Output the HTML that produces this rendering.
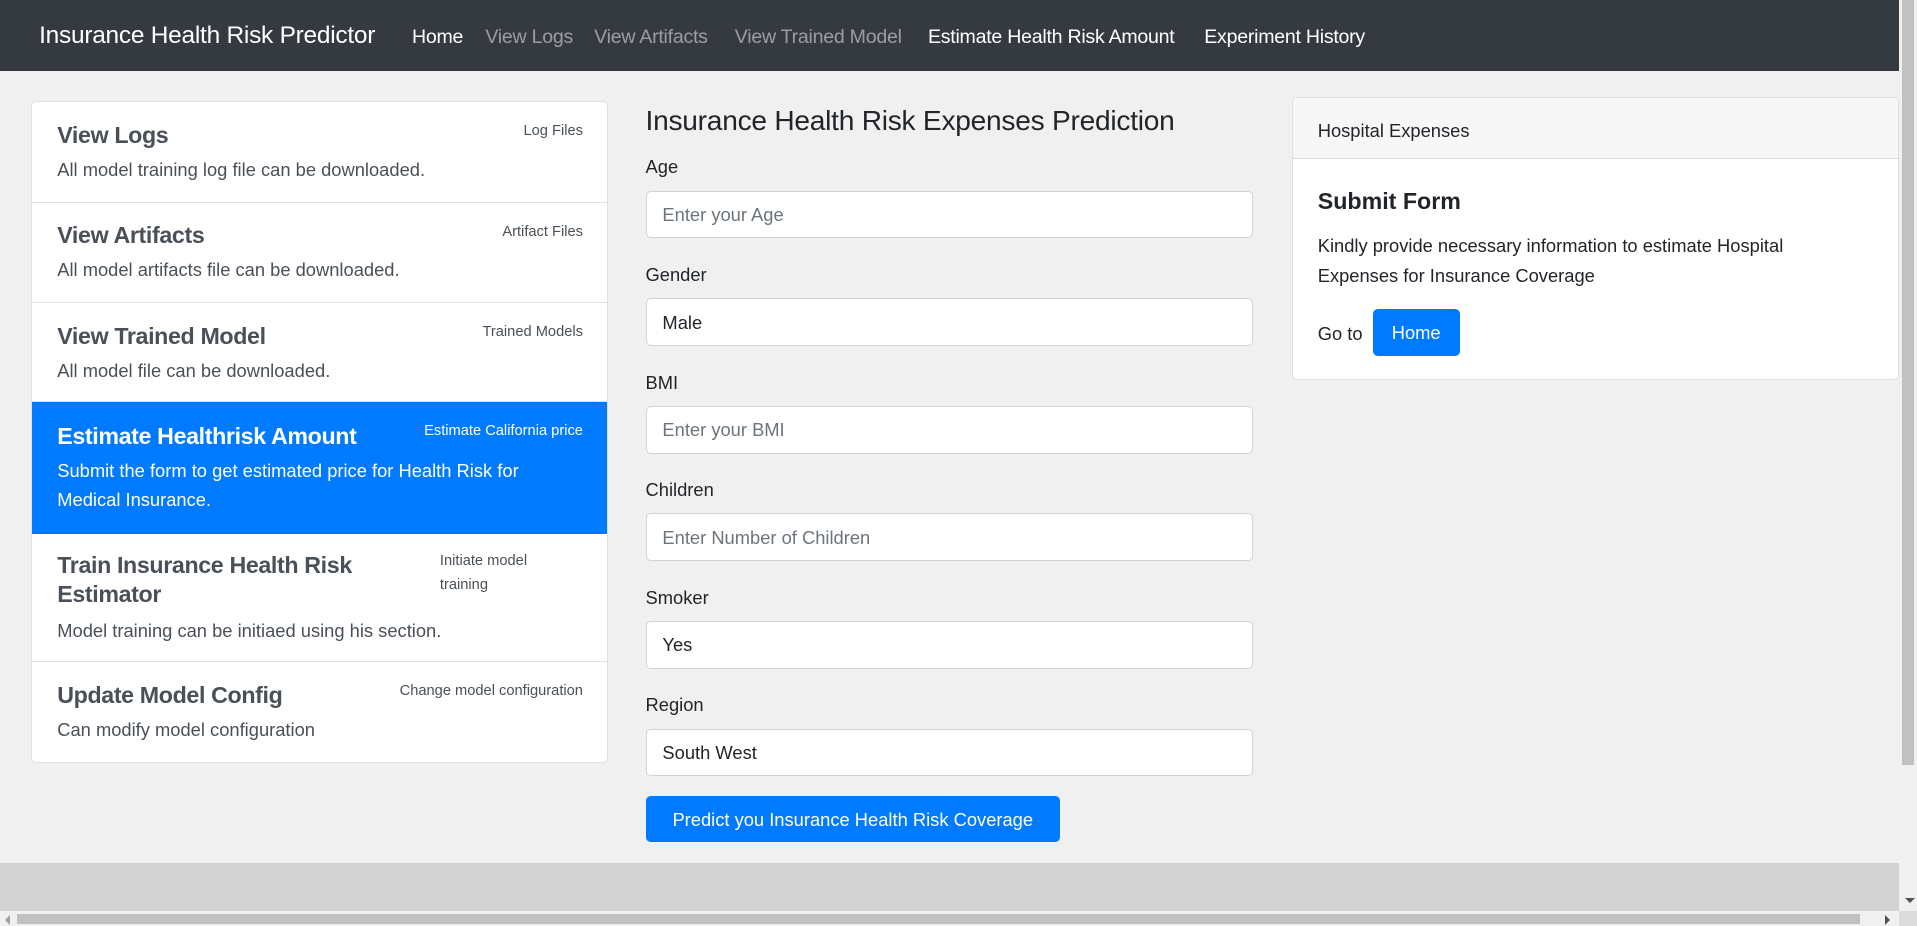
<!DOCTYPE html>
<html><head><meta charset="utf-8"><style>
html,body{margin:0;padding:0;width:1917px;height:926px;overflow:hidden;background:#f0f0f0;font-family:"Liberation Sans",sans-serif;}
#z{position:absolute;left:0;top:0;width:1568px;height:757px;zoom:1.2226;color:#212529;}
.a{position:absolute;white-space:nowrap;}
.nav{position:absolute;left:0;top:0;width:1568px;height:58px;background:#343a40;}
.nav .a{top:21px;font-size:16px;color:rgba(255,255,255,.5);letter-spacing:-0.2px;}
.card{position:absolute;background:#fff;border:1px solid rgba(0,0,0,.125);border-radius:4px;box-sizing:border-box;overflow:hidden;}
.it{position:absolute;left:0;width:472px;border-bottom:1px solid rgba(0,0,0,.125);box-sizing:border-box;}
.it h5{position:absolute;left:21px;margin:0;font-size:19px;font-weight:bold;color:#495057;letter-spacing:-0.3px;}
.it small{position:absolute;right:21px;top:17px;font-size:12px;color:#495057;}
.it p{position:absolute;left:21px;margin:0;font-size:15px;color:#495057;line-height:24px;}
.lbl{position:absolute;left:528px;font-size:15px;}
.inp{position:absolute;left:528px;width:497px;height:39px;background:#fff;border:1px solid #ced4da;border-radius:4px;box-sizing:border-box;font-size:15px;padding:10px 13px;}
.ph{color:#6c757d;}
</style></head><body>
<div id="z">
<div class="nav">
<span class="a" style="left:32px;top:18px;font-size:20px;color:#fff">Insurance Health Risk Predictor</span>
<span class="a" style="left:337px;color:#fff">Home</span>
<span class="a" style="left:397px">View Logs</span>
<span class="a" style="left:486px">View Artifacts</span>
<span class="a" style="left:601px">View Trained Model</span>
<span class="a" style="left:759px;color:#fff">Estimate Health Risk Amount</span>
<span class="a" style="left:985px;color:#fff">Experiment History</span>
</div>

<div class="card" style="left:25px;top:83px;width:472px;height:541px">
<div class="it" style="top:0;height:82px"><h5 style="top:16px">View Logs</h5><small>Log Files</small><p style="top:43px">All model training log file can be downloaded.</p></div>
<div class="it" style="top:82px;height:82px"><h5 style="top:16px">View Artifacts</h5><small>Artifact Files</small><p style="top:43px">All model artifacts file can be downloaded.</p></div>
<div class="it" style="top:164px;height:81px"><h5 style="top:16px">View Trained Model</h5><small>Trained Models</small><p style="top:43px">All model file can be downloaded.</p></div>
<div class="it" style="top:245px;height:108px;background:#007bff;border-color:#007bff"><h5 style="top:17px;color:#fff">Estimate Healthrisk Amount</h5><small style="color:#fff">Estimate California price</small><p style="top:44px;color:#fff;white-space:normal;width:430px">Submit the form to get estimated price for Health Risk for Medical Insurance.</p></div>
<div class="it" style="top:353px;height:105px"><h5 style="top:14px;line-height:24px;white-space:normal;width:270px">Train Insurance Health Risk Estimator</h5><small style="left:334px;top:12px;line-height:20px;white-space:normal">Initiate model<br>training</small><p style="top:67px">Model training can be initiaed using his section.</p></div>
<div class="it" style="top:458px;height:83px;border:0"><h5 style="top:16px">Update Model Config</h5><small>Change model configuration</small><p style="top:43px">Can modify model configuration</p></div>
</div>

<div class="a" style="left:528px;top:86px;font-size:23px;font-weight:400;letter-spacing:-0.2px">Insurance Health Risk Expenses Prediction</div>
<div class="lbl" style="top:128px">Age</div><div class="inp" style="top:156px"><span class="ph">Enter your Age</span></div>
<div class="lbl" style="top:216px">Gender</div><div class="inp" style="top:244px">Male</div>
<div class="lbl" style="top:304px">BMI</div><div class="inp" style="top:332px"><span class="ph">Enter your BMI</span></div>
<div class="lbl" style="top:392px">Children</div><div class="inp" style="top:420px"><span class="ph">Enter Number of Children</span></div>
<div class="lbl" style="top:480px">Smoker</div><div class="inp" style="top:508px">Yes</div>
<div class="lbl" style="top:568px">Region</div><div class="inp" style="top:596px">South West</div>
<div class="a" style="left:528px;top:651px;width:339px;height:38px;background:#007bff;border-radius:4px;color:#fff;font-size:15px;line-height:39px;text-align:center">Predict you Insurance Health Risk Coverage</div>

<div class="card" style="left:1057px;top:79px;width:496px;height:232px">
<div style="position:absolute;left:0;top:0;width:100%;height:50px;background:#f7f7f7;border-bottom:1px solid rgba(0,0,0,.125);box-sizing:border-box"></div>
<span class="a" style="left:20px;top:18px;font-size:15px">Hospital Expenses</span>
<span class="a" style="left:20px;top:74px;font-size:19px;font-weight:bold;color:#212529">Submit Form</span>
<div class="a" style="left:20px;top:109px;font-size:15px;line-height:25px;white-space:normal;width:450px">Kindly provide necessary information to estimate Hospital Expenses for Insurance Coverage</div>
<span class="a" style="left:20px;top:184px;font-size:15px">Go to</span>
<span class="a" style="left:65px;top:173px;width:71px;height:38px;background:#007bff;border-radius:4px;color:#fff;font-size:15px;line-height:39px;text-align:center">Home</span>
</div>

<div style="position:absolute;left:0;top:706px;width:1553px;height:39px;background:#d4d3d3"></div>
</div>
<div style="position:absolute;left:1899px;top:0;width:18px;height:911px;background:#f0f0f0"></div>
<div style="position:absolute;left:1902px;top:0;width:12px;height:765px;background:#c1c1c1"></div>
<div style="position:absolute;left:1905px;top:898px;width:0;height:0;border-left:5px solid transparent;border-right:5px solid transparent;border-top:5px solid #505050"></div>
<div style="position:absolute;left:0;top:911px;width:1917px;height:15px;background:#f0f0f0"></div>
<div style="position:absolute;left:17px;top:914px;width:1843px;height:10px;background:#c1c1c1"></div>
<div style="position:absolute;left:1885px;top:915px;width:0;height:0;border-top:5px solid transparent;border-bottom:5px solid transparent;border-left:5px solid #505050"></div>
<div style="position:absolute;left:5px;top:915px;width:0;height:0;border-top:5px solid transparent;border-bottom:5px solid transparent;border-right:5px solid #a0a0a0"></div>
<div style="position:absolute;left:1899px;top:911px;width:18px;height:15px;background:#dcdcdc"></div>
</body></html>
